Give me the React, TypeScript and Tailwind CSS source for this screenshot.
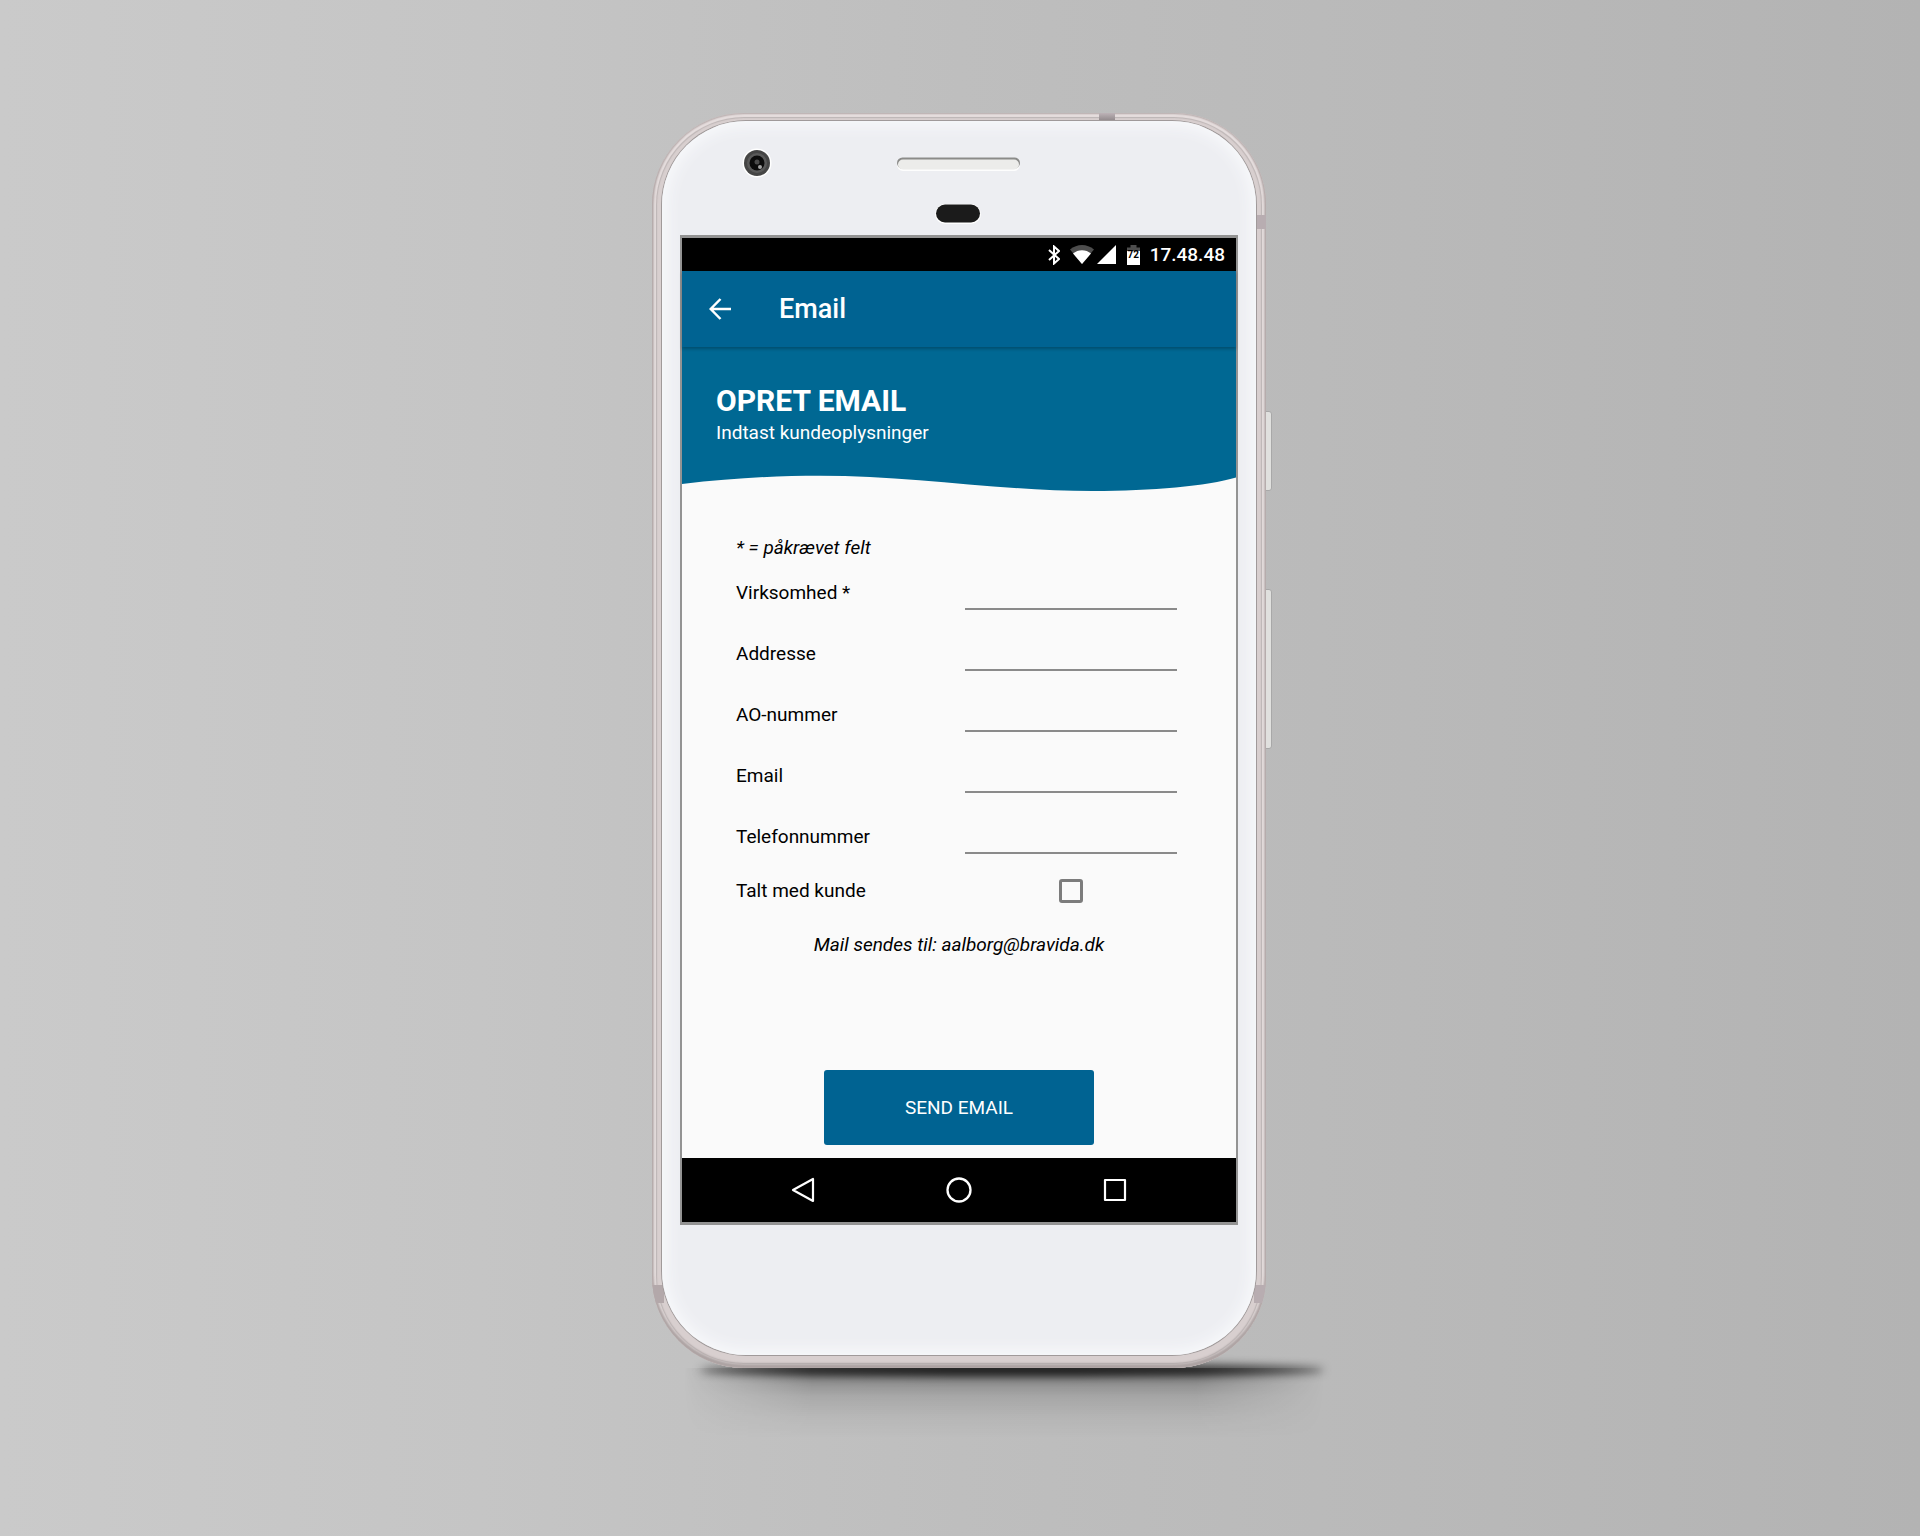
import { useState } from "react";

const FIELDS = [
  { id: "virksomhed", label: "Virksomhed *", type: "text", required: true },
  { id: "addresse", label: "Addresse", type: "text", required: false },
  { id: "ao-nummer", label: "AO-nummer", type: "text", required: false },
  { id: "email", label: "Email", type: "email", required: false },
  { id: "telefonnummer", label: "Telefonnummer", type: "tel", required: false },
];

function StatusBar() {
  return (
    <div className="flex h-[33px] items-center justify-end bg-black pr-[11px] text-white">
      <svg width="12" height="20" viewBox="0 0 12 20" fill="none" stroke="currentColor" strokeWidth="2" aria-label="Bluetooth">
        <path d="M1 5l10 9-5 4.500V1.500L11 6l-10 9" />
      </svg>
      <svg width="24" height="19" viewBox="0 0 24 19" className="ml-2.5" aria-label="Wi-Fi">
        <path d="M0 4.500C7-1.500 17-1.500 24 4.500L12 19z" fill="#4d4d4d" />
        <path d="M3 8.500C8 4 16 4 21 8.500L12 19z" fill="currentColor" />
      </svg>
      <svg width="19" height="19" viewBox="0 0 19 19" className="ml-[3px]" aria-label="Signal">
        <path d="M0 19L19 0V19z" fill="currentColor" />
      </svg>
      <div className="relative ml-[11px] h-5 w-[13px]">
        <svg width="13" height="20" viewBox="0 0 13 20" aria-hidden="true">
          <path d="M0 2.500H3.500V0H9.500V2.500H13V8H0z" fill="#4d4d4d" />
          <path d="M0 6H13V20H0z" fill="currentColor" />
        </svg>
        <span className="absolute inset-x-0 top-1 text-center text-[10px] leading-3 font-bold text-black">72</span>
      </div>
      <time className="ml-2.5 text-[19px] leading-6 font-medium">17.48.48</time>
    </div>
  );
}

function Toolbar() {
  return (
    <header className="relative flex h-[76px] items-center bg-[#006392] pl-[27px] text-white shadow-[0_2px_3px_rgba(0,0,0,0.25)]">
      <button type="button" aria-label="Tilbage" className="flex">
        <svg width="22" height="22" viewBox="0 0 22 22" fill="none" stroke="currentColor" strokeWidth="2.500">
          <path d="M22 11H2M11.500 1L1.700 11l9.800 10" />
        </svg>
      </button>
      <h1 className="ml-12 text-[27px] leading-8 font-medium">Email</h1>
    </header>
  );
}

function Hero() {
  return (
    <section>
      <div className="bg-[#006893] px-[34px] pt-9 pb-7 text-white">
        <h2 className="text-[30px] leading-9 font-bold">OPRET EMAIL</h2>
        <p className="text-[19px] leading-7">Indtast kundeoplysninger</p>
      </div>
      <svg viewBox="0 0 554 20" className="block h-5 w-full" preserveAspectRatio="none" aria-hidden="true">
        <path d="M0 9C50 3 95 .7 138 .7C230 .7 320 16 411 16C470 16 525 11 554 2.500V0H0z" fill="#006893" />
      </svg>
    </section>
  );
}

function EmailForm() {
  const [talked, setTalked] = useState(false);
  return (
    <form onSubmit={(e) => e.preventDefault()} className="flex flex-col pb-[13px] text-[19px] leading-6 text-black">
      <div className="pr-[59px] pl-[54px]">
        <p className="pt-[41px] italic">* = påkrævet felt</p>
        {FIELDS.map((f) => (
          <div key={f.id} className="flex h-[61px] items-end justify-between first-of-type:h-[50px]">
            <label htmlFor={f.id} className="pb-[5px]">{f.label}</label>
            <input
              id={f.id}
              type={f.type}
              required={f.required}
              className="h-9 w-[212px] border-b-2 border-[#8a8a8a] bg-transparent px-1 outline-none focus:border-[#006392]"
            />
          </div>
        ))}
        <div className="flex items-center justify-between pt-[25px]">
          <label htmlFor="talt">Talt med kunde</label>
          <div className="flex w-[212px] justify-center">
            <input
              id="talt"
              type="checkbox"
              checked={talked}
              onChange={(e) => setTalked(e.target.checked)}
              className="size-6 appearance-none rounded-[3px] border-[3px] border-[#7c7c7c] checked:bg-[#006392]"
            />
          </div>
        </div>
      </div>
      <p className="pt-[30px] text-center italic">Mail sendes til: aalborg@bravida.dk</p>
      <button
        type="submit"
        className="mx-auto mt-[113px] h-[75px] w-[270px] rounded-[3px] bg-[#006392] text-white"
      >
        SEND EMAIL
      </button>
    </form>
  );
}

function NavBar() {
  return (
    <nav className="flex h-16 items-center justify-center gap-[130px] bg-black text-white">
      <button type="button" aria-label="Tilbage">
        <svg width="26" height="26" viewBox="0 0 26 26" fill="none" stroke="currentColor" strokeWidth="2.200" strokeLinejoin="round">
          <path d="M23 2V24L3 13z" />
        </svg>
      </button>
      <button type="button" aria-label="Hjem">
        <svg width="26" height="26" viewBox="0 0 26 26" fill="none" stroke="currentColor" strokeWidth="2.300">
          <circle cx="13" cy="13" r="11.500" />
        </svg>
      </button>
      <button type="button" aria-label="Oversigt">
        <svg width="26" height="26" viewBox="0 0 26 26" fill="none" stroke="currentColor" strokeWidth="2.200" strokeLinejoin="round">
          <path d="M3 3H23V23H3z" />
        </svg>
      </button>
    </nav>
  );
}

function Forehead() {
  return (
    <svg viewBox="0 0 558 114" className="block w-full" aria-hidden="true">
      <circle cx="77" cy="42" r="14.500" fill="#fff" />
      <circle cx="77" cy="42" r="13" fill="#454545" />
      <circle cx="77" cy="42" r="10" fill="#5a5a5a" />
      <circle cx="77" cy="42" r="7.500" fill="#0c0c0c" />
      <circle cx="77" cy="41" r="2.500" fill="#4a4a4a" />
      <circle cx="80" cy="46" r="2" fill="#a5a5a5" />
      <rect x="217" y="38" width="123" height="12" rx="6" fill="#fdfdfd" />
      <rect x="217" y="36.500" width="123" height="11" rx="5.500" fill="#8b8b89" />
      <rect x="218" y="38.500" width="121" height="10" rx="5" fill="#ececea" />
      <rect x="255" y="83" width="46" height="20" rx="10" fill="#fff" />
      <rect x="256" y="83.500" width="44" height="18" rx="9" fill="#1b1b1b" />
    </svg>
  );
}

export default function App() {
  return (
    <main className="min-h-screen bg-[linear-gradient(90deg,#cacaca,#c5c5c5_25%,#bebebe_50%,#b8b8b8_78%,#b3b3b3)] px-4 py-[113px] font-['Roboto',sans-serif]">
      <div className="relative mx-auto w-full max-w-[616px] pr-0.5">
        <div className="absolute -right-14 -bottom-2 left-12 h-3 rounded-[50%] bg-black/80 blur-[5px]" />
        <div className="absolute top-full -right-14 left-8 h-[70px] bg-[linear-gradient(180deg,rgba(0,0,0,0.42),rgba(0,0,0,0.26)_18%,rgba(0,0,0,0.12)_40%,rgba(0,0,0,0.04)_70%,transparent)] [mask-image:linear-gradient(90deg,transparent,black_20%,black_80%,transparent)]" />
        <div className="absolute top-[298px] -right-1 h-20 w-3 rounded-[3px] border border-[#a8a8a8] bg-[#e0e0de]" />
        <div className="absolute top-[476px] -right-1 h-40 w-3 rounded-[3px] border border-[#a8a8a8] bg-[#e0e0de]" />

        <div className="relative overflow-hidden rounded-[92px] bg-[#d8cfcf] px-2.5 pt-2 pb-[13px] shadow-[inset_0_0_2px_1px_#b3a8a8,inset_0_-3px_3px_1px_#a89f9f,inset_0_0_1px_4px_#e8e0e0,inset_0_0_1px_5px_#b9b1b1]">
          <div className="absolute top-0 left-[447px] h-2 w-4 bg-linear-to-b from-[#bdb3b7] to-[#8f8789]" />
          <div className="absolute top-[102px] right-0 h-[14px] w-2.5 bg-[#b8adb1]" />
          <div className="absolute bottom-[65px] left-0 h-[18px] w-3 bg-[#b3a8aa]" />
          <div className="absolute right-0 bottom-[65px] h-[18px] w-3 bg-[#b8adb1]" />
          <div className="relative rounded-[84px] bg-[#edeef2] px-[18px] pb-[130px] shadow-[0_0_0_1px_#a09a9a,inset_0_0_16px_4px_#f9fafc]">
            <Forehead />
            <div className="border-x-2 border-y-[3px] border-[#939393] bg-[#fafafa]">
              <StatusBar />
              <Toolbar />
              <Hero />
              <EmailForm />
              <NavBar />
            </div>
          </div>
        </div>
      </div>
    </main>
  );
}
